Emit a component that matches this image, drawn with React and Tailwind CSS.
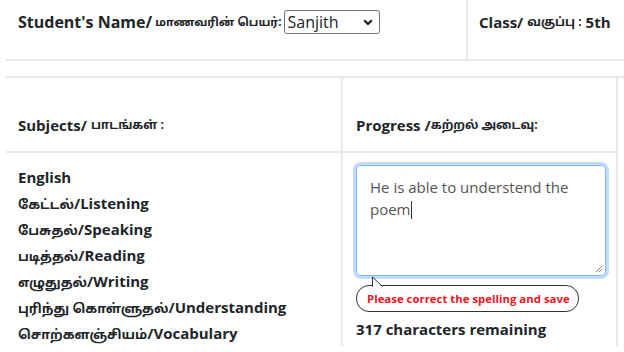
export default function App() {
  const font = { fontFamily: '"Open Sans", "Noto Sans", "Noto Sans Tamil", "Lohit Tamil", sans-serif' };
  const subjects = [
    "கேட்டல்/Listening",
    "பேசுதல்/Speaking",
    "படித்தல்/Reading",
    "எழுதுதல்/Writing",
    "புரிந்து கொள்ளுதல்/Understanding",
    "சொற்களஞ்சியம்/Vocabulary",
  ];
  return (
    <div className="w-[624px] h-[352px] overflow-hidden bg-white pl-[6px] text-[#212529]" style={font}>
      <div className="flex h-[61px] border-b-2 border-[#e9e9e9]">
        <div className="w-[460px] flex items-start pt-[10px] pl-[12px]">
          <span className="text-[16px] font-bold leading-[24px]">Student's Name/</span>
          <span className="text-[11.5px] font-bold leading-[24px] ml-[3px]">மாணவரின் பெயர்:</span>
          <div className="ml-[2px] w-[96px] h-[24px] border border-[#767676] rounded-[3px] flex items-center justify-between pl-[3px] pr-[6px]">
            <span className="text-[16px] leading-[20px]">Sanjith</span>
            <svg width="10" height="7" viewBox="0 0 10 7"><path d="M1.2 1.3 L5 5 L8.8 1.3" fill="none" stroke="#111" strokeWidth="2" /></svg>
          </div>
        </div>
        <div className="flex-1 border-l-2 border-[#e9e9e9] pl-[11px] pt-[10px] flex items-start">
          <span className="text-[15px] font-bold leading-[24px]">Class/</span>
          <span className="text-[12px] font-bold leading-[24px] ml-[4px]">வகுப்பு :</span>
          <span className="text-[15px] font-bold leading-[24px] ml-[4px]">5th</span>
        </div>
      </div>
      <div className="h-[17px] border-b-2 border-[#e9e9e9]"></div>
      <div className="flex">
        <div className="w-[337px] border-r-2 border-[#e9e9e9]">
          <div className="h-[75px] border-b-2 border-[#e9e9e9] flex items-end pb-[14px] pl-[12px]">
            <span className="text-[15px] font-bold leading-[24px]">Subjects/</span>
            <span className="text-[12px] font-bold leading-[24px] ml-[4px]">பாடங்கள் :</span>
          </div>
          <div className="pl-[12px] pt-[11px] flex flex-col">
            <div className="h-[26px] text-[15px] font-bold leading-[26px]">English</div>
            {subjects.map((s) => {
              const [ta, en] = s.split("/");
              return (
                <div key={s} className="h-[26px] leading-[26px] font-bold whitespace-nowrap">
                  <span className="text-[13px] leading-[26px]">{ta}</span>
                  <span className="text-[15px] leading-[26px]">/{en}</span>
                </div>
              );
            })}
          </div>
        </div>
        <div className="w-[275px] border-r-2 border-[#e9e9e9]">
          <div className="h-[75px] border-b-2 border-[#e9e9e9] flex items-end pb-[14px] pl-[13px]">
            <span className="text-[15px] font-bold leading-[24px]">Progress /</span>
            <span className="text-[12px] font-bold leading-[24px]">கற்றல் அடைவு:</span>
          </div>
          <div className="pl-[13px] pt-[12px]">
            <div className="w-[250px] h-[111px] rounded-[5px] border border-[#86b7fe] shadow-[0_0_0_3px_rgba(13,110,253,0.25)] px-[13px] pt-[10px] text-[15px] leading-[22px] text-[#555] relative">
              He is able to understend the poem<span className="inline-block w-[1px] h-[18px] bg-[#333] align-[-4px]"></span>
              <svg className="absolute right-[2px] bottom-[2px]" width="8" height="8" viewBox="0 0 8 8"><path d="M7 1 L1 7 M7 4 L4 7" stroke="#888" strokeWidth="1" /></svg>
            </div>
            <div className="relative mt-[9px] w-[223px] h-[27px] border border-[#333] rounded-[13px] flex items-center pl-[10px]">
              <svg className="absolute left-[14px] top-[-10px]" width="14" height="11" viewBox="0 0 14 11">
                <path d="M1.5 11 L1.5 1.5 L11 11 Z" fill="white" />
                <path d="M1.5 10.5 L1.5 1 L11.5 10.5" fill="none" stroke="#333" strokeWidth="1" />
              </svg>
              <span className="text-[11.4px] font-bold text-[#f0141e] whitespace-nowrap">Please correct the spelling and save</span>
            </div>
            <div className="mt-[5px] text-[15px] font-bold leading-[24px]">317 characters remaining</div>
          </div>
        </div>
      </div>
    </div>
  );
}
